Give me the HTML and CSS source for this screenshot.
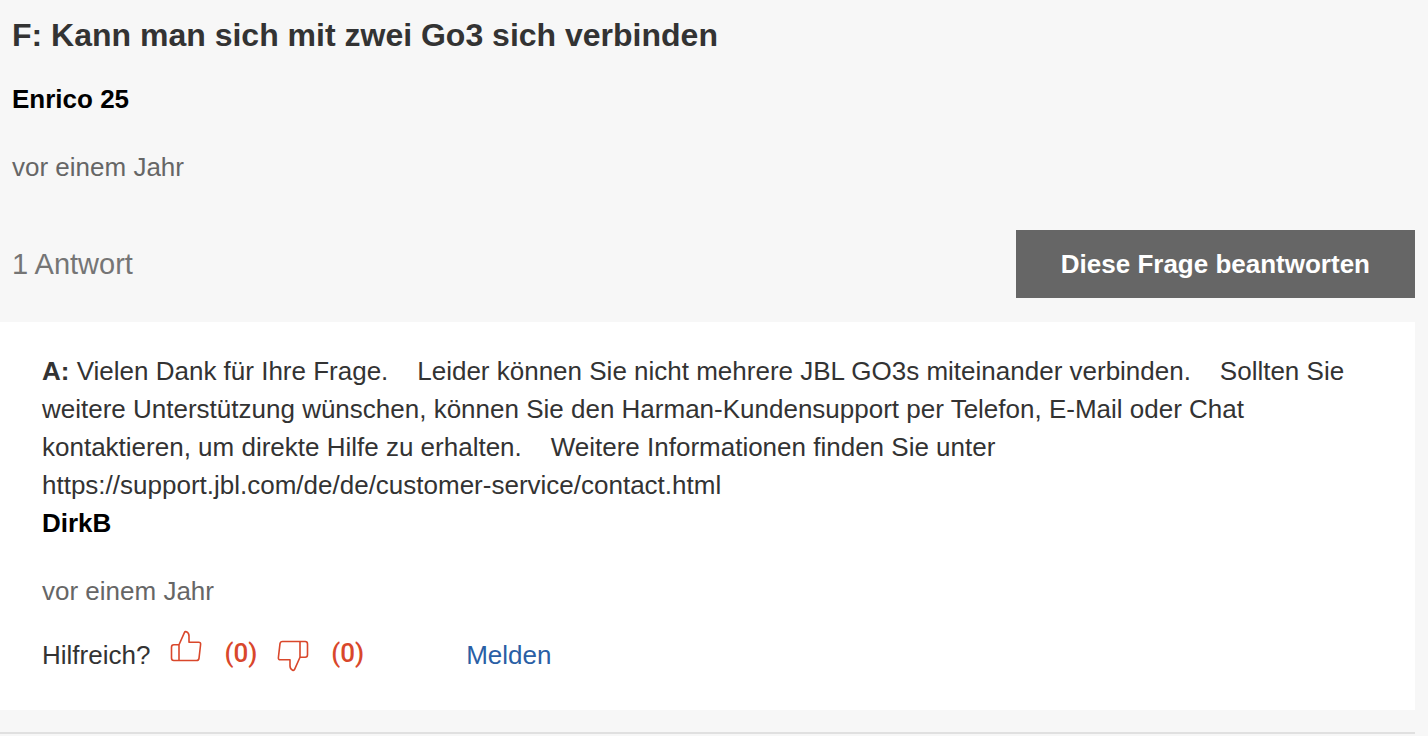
FILE: index.html
```html
<!doctype html>
<html lang="de">
  <head>
    <meta charset="UTF-8" />
    <meta name="viewport" content="width=device-width, initial-scale=1.0" />
    <title>Fragen und Antworten</title>
    <link rel="stylesheet" href="styles.css">
  </head>
  <body>
    <section class="question">
      <div class="question-header">
        <h2>F: Kann man sich mit zwei Go3 sich verbinden</h2>
        <p class="author">Enrico 25</p>
        <p class="date">vor einem Jahr</p>
      </div>
      <div class="question-actions">
        <span class="answer-count">1 Antwort</span>
        <button class="answer-button" type="button">Diese Frage beantworten</button>
      </div>
      <article class="answer">
        <p><strong>A:</strong> Vielen Dank für Ihre Frage.&nbsp;&nbsp;&nbsp; Leider können Sie nicht mehrere JBL GO3s miteinander verbinden.&nbsp;&nbsp;&nbsp; Sollten Sie weitere Unterstützung wünschen, können Sie den Harman-Kundensupport per Telefon, E-Mail oder Chat kontaktieren, um direkte Hilfe zu erhalten.&nbsp;&nbsp;&nbsp; Weitere Informationen finden Sie unter https://support.jbl.com/de/de/customer-service/contact.html</p>
        <p class="author">DirkB</p>
        <p class="date">vor einem Jahr</p>
        <div class="feedback">
          <span>Hilfreich?</span>
          <button class="vote vote-up" type="button">
            <svg width="32" height="34" viewBox="0 0 32 34" aria-hidden="true">
              <path d="M9 14.8L14.4 2.6Q15 1.2 16.4 1.8Q19 3 19 6V12.2H28.6Q30.9 12.2 30.6 14.5L29 28.3Q28.7 30.5 26.5 30.5H3.8Q1.5 30.5 1.5 28V17.3Q1.5 14.8 3.8 14.8H9V30.5" />
            </svg>
            <span>(0)</span>
          </button>
          <button class="vote vote-down" type="button">
            <svg width="32" height="34" viewBox="0 0 32 34" aria-hidden="true">
              <path d="M23 19.2L17.6 31.4Q17 32.8 15.6 32.2Q13 31 13 28V21.8H3.4Q1.1 21.8 1.4 19.5L3 5.7Q3.3 3.5 5.5 3.5H28.2Q30.5 3.5 30.5 6V16.7Q30.5 19.2 28.2 19.2H23V3.5" />
            </svg>
            <span>(0)</span>
          </button>
          <a class="report" href="#">Melden</a>
        </div>
      </article>
    </section>
  </body>
</html>
```
FILE: styles.css
```css
body {
  margin: 0;
  font-family: "Liberation Sans", Arial, sans-serif;
  font-size: 26px;
  line-height: 38px;
  color: #333;
  background-color: #f7f7f7;
}

h2,
p {
  margin: 0;
}
h2 {
  font-size: 32px;
  margin-bottom: 26px;
}

.question {
  margin-right: 13px;
  padding: 16px 0 22px;
  border-bottom: 2px solid #e0e0e0;
}
.question-header,
.question-actions {
  padding-left: 12px;
}
.author {
  margin-bottom: 30px;
  color: #000;
  font-weight: bold;
}
.date {
  color: #666;
}

.question-actions {
  display: flex;
  justify-content: space-between;
  align-items: center;
  margin: 44px 0 24px;
}
.answer-count {
  color: #757575;
  font-size: 29px;
}
.answer-button {
  padding: 15px 45px;
  border: none;
  background-color: #666;
  color: #fff;
  font: inherit;
  font-weight: bold;
  cursor: pointer;
}

.answer {
  padding: 30px 30px 36px 42px;
  background-color: #fff;
}
.feedback {
  display: flex;
  align-items: center;
  margin-top: 26px;
}
.vote {
  display: flex;
  align-items: center;
  gap: 22px;
  height: 38px;
  margin-left: 20px;
  padding: 0 0 4px;
  border: none;
  background: none;
  color: #d9472b;
  font: 500 26px/34px Roboto, sans-serif;
  cursor: pointer;
}
.vote svg {
  fill: none;
  stroke: currentColor;
  stroke-width: 1.6;
  stroke-linejoin: round;
}
.vote-up svg {
  margin-bottom: 12px;
}
.vote-down svg {
  margin-top: 4px;
}
.report {
  margin-left: 102px;
  color: #2a5fa5;
  text-decoration: none;
}
```
